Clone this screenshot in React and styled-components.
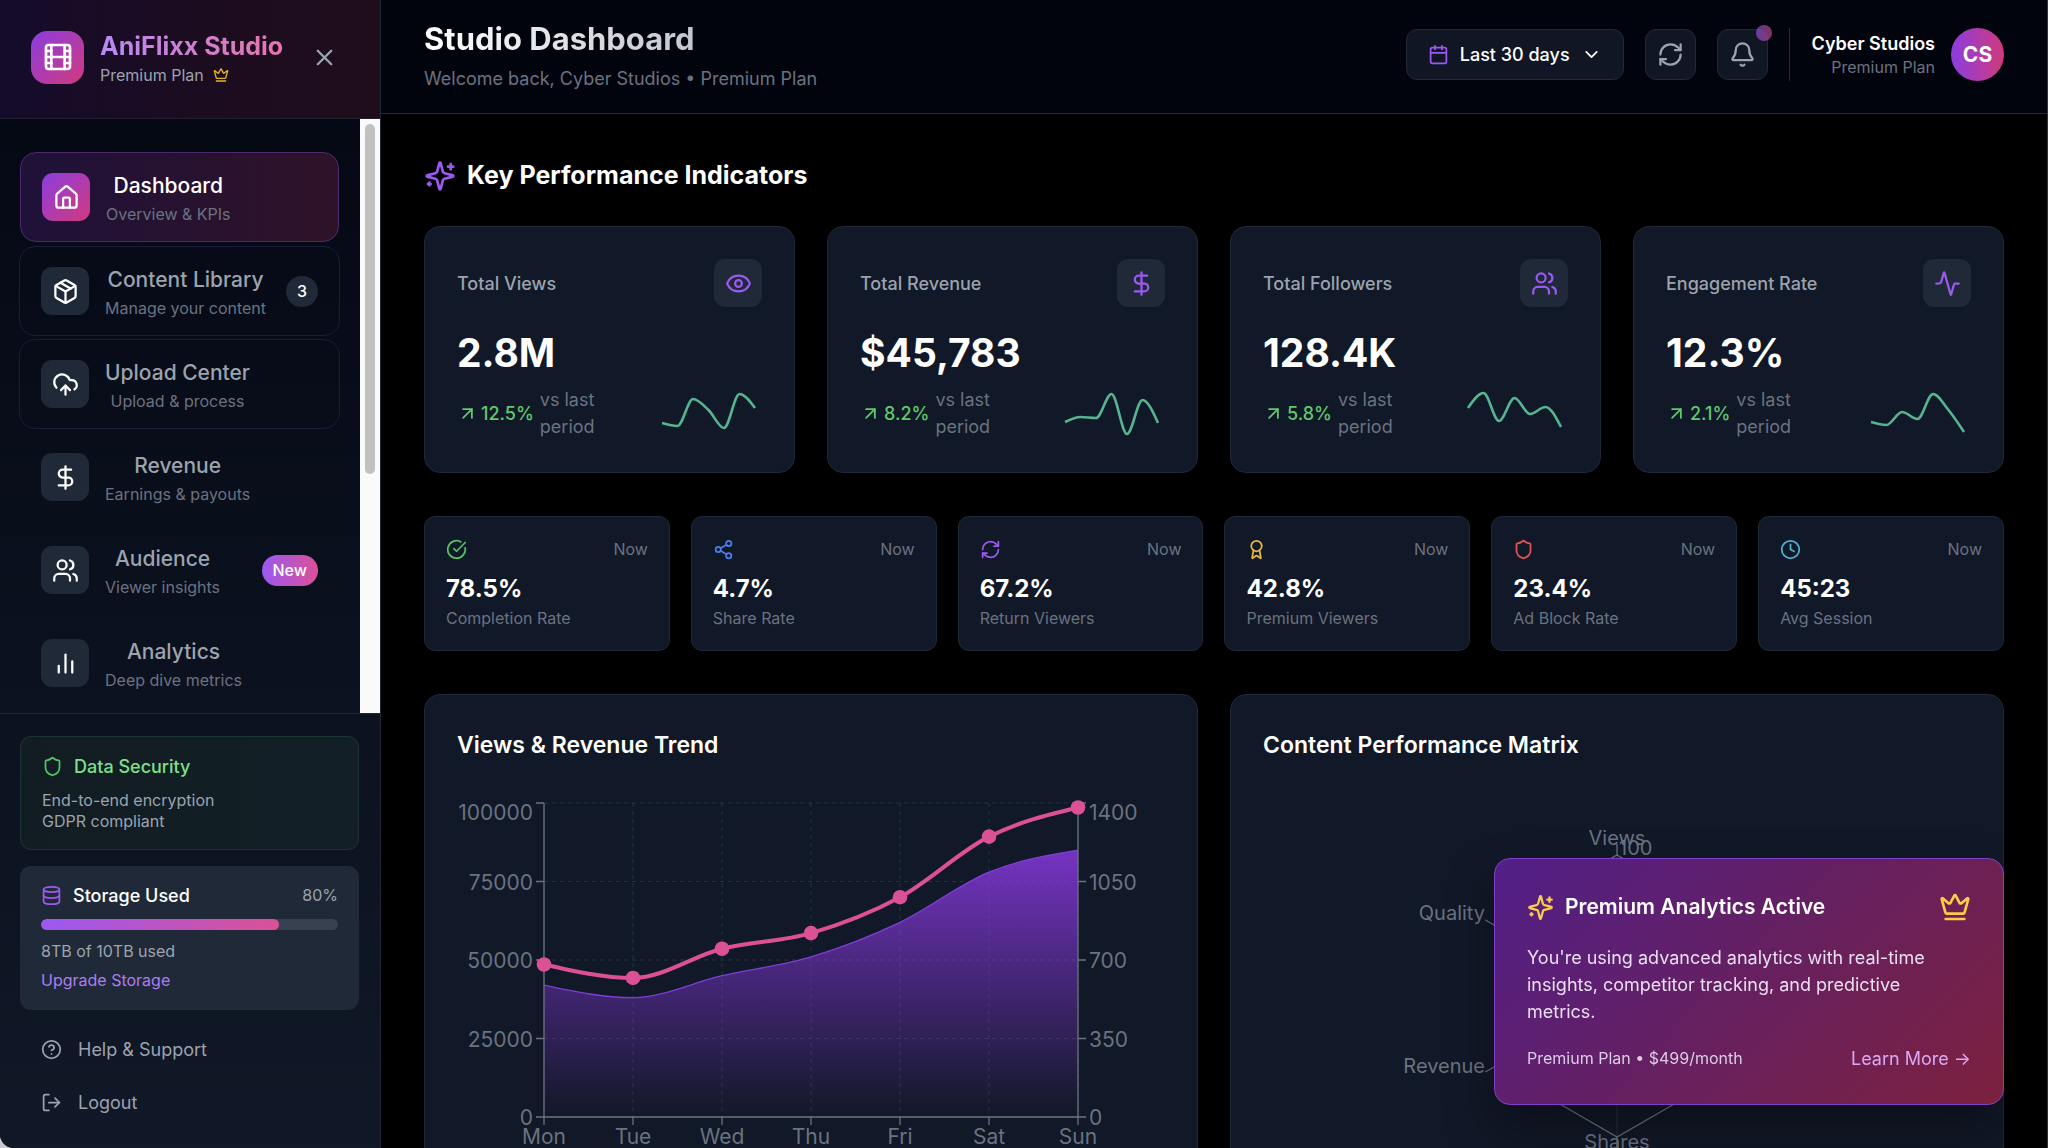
import React from "react";
import styled, { createGlobalStyle, css } from "styled-components";
import {
  Activity,
  ArrowUpRight,
  Award,
  Bell,
  Calendar,
  ChevronDown,
  CircleCheckBig,
  Clock,
  CloudUpload,
  Crown,
  Database,
  DollarSign,
  Eye,
  Film,
  HelpCircle,
  House,
  LogOut,
  Package,
  RefreshCw,
  Share2,
  Shield,
  Users,
  X,
} from "lucide-react";

const color = {
  panel: "#111827",
  raised: "#1f2937",
  line: "#1f2937",
  text: "#ffffff",
  soft: "#9ca3af",
  dim: "#6b7280",
  purple: "#9b59f2",
  green: "#5fc96b",
  spark: "#56b590",
  pink: "#dc5096",
  gold: "#fbcb4a",
};

const brandGradient = "linear-gradient(135deg, #8b3de0, #d13a7c)";

const GlobalStyle = createGlobalStyle`
  *, *::before, *::after { box-sizing: border-box; }
  body {
    margin: 0;
    background: #c9cbd0;
    color: ${color.text};
    font-family: Inter, "Noto Sans", sans-serif;
    font-size: 18px;
    line-height: 27px;
  }
  button, select { font: inherit; color: inherit; }
  button { cursor: pointer; }
  h1, h2, h3, p, ul, dl, dd { margin: 0; padding: 0; }
  ul { list-style: none; }
  svg { display: block; flex-shrink: 0; }
`;

const Shell = styled.div`
  display: flex;
  height: 100vh;
  background: #000;
  border-right: 1px solid #33363c;
  border-bottom-left-radius: 14px;
  overflow: hidden;
`;

/* ---------- Sidebar ---------- */

const Sidebar = styled.aside`
  display: flex;
  flex-direction: column;
  flex: 0 0 381px;
  min-height: 0;
  border-right: 1px solid ${color.line};
  background: linear-gradient(180deg, #030712, #111827);
`;

const Brand = styled.div`
  display: flex;
  align-items: center;
  height: 119px;
  padding: 0 31px 4px;
  border-bottom: 1px solid #231f30;
  background: linear-gradient(90deg, #150b2b, #1b0c20 50%, #1f0d1b);
`;

const BrandMark = styled.div`
  display: grid;
  place-items: center;
  width: 53px;
  height: 53px;
  margin-right: 16px;
  border-radius: 16px;
  background: ${brandGradient};
`;

const BrandText = styled.div`
  flex: 1;
  min-width: 0;
`;

const BrandName = styled.div`
  width: fit-content;
  font-size: 25px;
  font-weight: 700;
  line-height: 36px;
  white-space: nowrap;
  color: transparent;
  background: linear-gradient(90deg, #b78af5, #e874ae);
  background-clip: text;
`;

const BrandPlan = styled.div`
  display: flex;
  align-items: center;
  gap: 9px;
  font-size: 16px;
  line-height: 22px;
  color: ${color.soft};
`;

const CloseButton = styled.button`
  display: grid;
  place-items: center;
  width: 49px;
  height: 49px;
  padding: 0;
  border: 0;
  background: none;
  color: ${color.soft};
`;

const NavArea = styled.div`
  display: flex;
  flex: 1;
  min-height: 0;
`;

const NavList = styled.nav`
  display: flex;
  flex-direction: column;
  flex: 1;
  gap: 3px;
  min-width: 0;
  padding: 33px 20px 0 19px;
  overflow: hidden;
`;

const ScrollTrack = styled.div`
  flex: 0 0 20px;
  padding: 5px;
  background: #fafafa;
`;

const ScrollThumb = styled.div`
  height: 60%;
  border-radius: 5px;
  background: #c1c1c1;
`;

const NavIcon = styled.span`
  display: grid;
  place-items: center;
  flex: 0 0 48px;
  height: 48px;
  border-radius: 11px;
  background: ${color.raised};
  color: #fff;
`;

const NavItem = styled.button`
  display: flex;
  align-items: center;
  gap: 16px;
  padding: 16px 21px;
  border: 1px solid ${(p) => (p.$outlined ? "#1e1a3c" : "transparent")};
  border-radius: 16px;
  background: none;
  color: ${color.soft};
  ${(p) =>
    p.$active &&
    css`
      margin: 0 1px 1px;
      border-color: #4b2a6e;
      background: linear-gradient(90deg, #1f1139, #2f1228);
      color: #fff;
      ${NavIcon} {
        background: ${brandGradient};
      }
    `}
`;

const NavText = styled.span`
  display: flex;
  flex-direction: column;
  gap: 1px;
  text-align: center;
  white-space: nowrap;
`;

const NavTitle = styled.span`
  font-size: 21px;
  font-weight: 500;
  line-height: 34px;
`;

const NavHint = styled.span`
  font-size: 16px;
  line-height: 21px;
  color: ${color.dim};
`;

const NavBadge = styled.span`
  margin-left: auto;
  padding: 5px 11px;
  border-radius: 16px;
  font-size: 16px;
  font-weight: 500;
  line-height: 21px;
  color: #fff;
  background: ${(p) =>
    p.$bright ? "linear-gradient(90deg, #9b59f2, #dc5096)" : color.raised};
`;

const SideFooter = styled.div`
  padding: 22px 21px 19px 20px;
  border-top: 1px solid ${color.line};
`;

const SecurityCard = styled.section`
  padding: 16px 21px 17px;
  border: 1px solid #1c3530;
  border-radius: 11px;
  background: linear-gradient(90deg, #111d22, #121f26);
  font-size: 16px;
  line-height: 21px;
  color: ${color.soft};
`;

const StorageCard = styled.section`
  margin: 16px 0 13px;
  padding: 16px 21px;
  border-radius: 11px;
  background: ${color.raised};
  font-size: 16px;
  line-height: 22px;
  color: ${color.soft};
`;

const SideHeading = styled.h3`
  display: flex;
  align-items: center;
  gap: 11px;
  margin-bottom: 10px;
  font-size: 18px;
  font-weight: 500;
  line-height: 27px;
  color: ${(p) => p.$tone || "#fff"};
`;

const Percent = styled.span`
  margin-left: auto;
  font-size: 16px;
  font-weight: 400;
  color: ${color.soft};
`;

const Meter = styled.div`
  height: 11px;
  margin-bottom: 10px;
  border-radius: 6px;
  background: #374151;
  overflow: hidden;
`;

const MeterFill = styled.div`
  height: 100%;
  border-radius: 6px;
  background: linear-gradient(90deg, #9b59f2, #dc5096);
`;

const UpgradeButton = styled.button`
  display: block;
  margin-top: 5px;
  padding: 0;
  border: 0;
  background: none;
  font-size: 16px;
  line-height: 27px;
  color: #ad7df0;
`;

const SideAction = styled.button`
  display: flex;
  align-items: center;
  gap: 16px;
  width: 100%;
  padding: 13px 21px;
  border: 0;
  background: none;
  color: ${color.soft};
`;

/* ---------- Top bar ---------- */

const Main = styled.main`
  display: flex;
  flex-direction: column;
  flex: 1;
  min-width: 0;
`;

const TopBar = styled.header`
  display: flex;
  align-items: center;
  justify-content: space-between;
  padding: 18px 43px 21px;
  border-bottom: 1px solid ${color.line};
  background: #02040d;
`;

const PageTitle = styled.h1`
  width: fit-content;
  margin-bottom: 5px;
  font-size: 31px;
  font-weight: 700;
  line-height: 42px;
  color: transparent;
  background: linear-gradient(90deg, #fff, #c3c6cd);
  background-clip: text;
`;

const Muted = styled.p`
  color: ${color.dim};
`;

const Controls = styled.div`
  display: flex;
  align-items: center;
  gap: 21px;
  padding-bottom: 2px;
`;

const controlBox = css`
  border: 1px solid ${color.line};
  border-radius: 11px;
  background: #101624;
`;

const RangePicker = styled.label`
  ${controlBox}
  display: flex;
  align-items: center;
  gap: 11px;
  height: 51px;
  padding: 0 21px;
`;

const RangeSelect = styled.select`
  field-sizing: content;
  appearance: none;
  padding: 0;
  border: 0;
  background: none;
  font-weight: 500;
`;

const IconButton = styled.button`
  ${controlBox}
  position: relative;
  display: grid;
  place-items: center;
  width: 51px;
  height: 51px;
  padding: 0;
  color: ${color.soft};
`;

const AlertDot = styled.span`
  position: absolute;
  top: -5px;
  right: -5px;
  width: 16px;
  height: 16px;
  border-radius: 50%;
  background: linear-gradient(90deg, #9b59f2, #dc5096);
  opacity: 0.6;
`;

const Account = styled.div`
  display: flex;
  align-items: center;
  gap: 16px;
  padding-left: 22px;
  border-left: 1px solid ${color.line};
  text-align: right;
`;

const AccountName = styled.div`
  font-weight: 600;
`;

const AccountPlan = styled.div`
  font-size: 16px;
  line-height: 21px;
  color: ${color.dim};
`;

const Avatar = styled.div`
  display: grid;
  place-items: center;
  width: 53px;
  height: 53px;
  border-radius: 50%;
  background: linear-gradient(90deg, #8b3de0, #d13a7c);
  font-size: 21px;
  font-weight: 700;
`;

/* ---------- Content ---------- */

const Content = styled.div`
  flex: 1;
  min-height: 0;
  padding: 43px;
  overflow-y: auto;
  scrollbar-width: none;
`;

const SectionTitle = styled.h2`
  display: flex;
  align-items: center;
  gap: 11px;
  margin-bottom: 32px;
  font-size: 25px;
  font-weight: 700;
  line-height: 37px;
`;

const CardGrid = styled.div`
  display: grid;
  grid-template-columns: repeat(${(p) => p.$columns}, minmax(0, 1fr));
  gap: ${(p) => p.$gap}px;
  margin-bottom: 43px;
`;

const Card = styled.section`
  padding: 32px;
  border: 1px solid ${color.line};
  border-radius: 16px;
  background: ${color.panel};
`;

const SmallCard = styled.section`
  padding: 21px;
  border: 1px solid ${color.line};
  border-radius: 11px;
  background: ${color.panel};
`;

const Spread = styled.div`
  display: flex;
  align-items: center;
  justify-content: space-between;
`;

const KpiLabel = styled.h3`
  font-size: 18px;
  font-weight: 500;
  color: ${color.soft};
`;

const KpiIcon = styled.div`
  display: grid;
  place-items: center;
  width: 48px;
  height: 48px;
  border-radius: 11px;
  background: ${color.raised};
  color: ${color.purple};
`;

const KpiValue = styled.div`
  margin: 21px 0 8px;
  font-size: 39px;
  font-weight: 700;
  line-height: 50px;
`;

const Trend = styled.div`
  display: flex;
  align-items: center;
  color: ${color.green};
  font-weight: 500;
`;

const TrendValue = styled.span`
  margin: 0 6px 0 3px;
`;

const TrendNote = styled.span`
  max-width: 64px;
  font-weight: 400;
  color: ${color.dim};
`;

const SmallTop = styled(Spread)`
  height: 22px;
  margin-bottom: 11px;
  font-size: 16px;
  color: ${color.dim};
`;

const SmallValue = styled.div`
  font-size: 24px;
  font-weight: 700;
  line-height: 36px;
`;

const SmallLabel = styled.div`
  font-size: 16px;
  line-height: 22px;
  color: ${color.dim};
`;

const ChartTitle = styled.h3`
  margin-bottom: 32px;
  font-size: 23px;
  font-weight: 600;
  line-height: 37px;
`;

const Chart = styled.svg`
  width: 100%;
  height: auto;
  font-size: ${(p) => p.$label}px;
  text {
    fill: ${color.dim};
  }
`;

/* ---------- Floating notice ---------- */

const Notice = styled.aside`
  position: fixed;
  right: 44px;
  bottom: 43px;
  width: 510px;
  padding: 32px;
  border: 1px solid #7f3fcb;
  border-radius: 16px;
  background: linear-gradient(135deg, #511f88, #662060 50%, #7c213e);
  box-shadow: 0 24px 48px rgba(0, 0, 0, 0.35);
`;

const NoticeTitle = styled.h3`
  display: flex;
  align-items: center;
  gap: 11px;
  font-size: 21px;
  font-weight: 600;
  line-height: 32px;
`;

const NoticeText = styled.p`
  margin: 21px 0 20px;
  color: #eadff2;
`;

const NoticePlan = styled.span`
  font-size: 16px;
  color: #dccde6;
`;

const NoticeLink = styled.a`
  color: #d9a9f7;
  text-decoration: none;
`;

/* ---------- Drawings ---------- */

const Sparkles = ({ size, stroke }) => (
  <svg
    width={size}
    height={size}
    viewBox="0 0 24 24"
    fill="none"
    stroke={stroke}
    strokeWidth="2"
    strokeLinecap="round"
    strokeLinejoin="round"
    aria-hidden="true"
  >
    <path d="M9.937 15.5A2 2 0 0 0 8.5 14.063l-6.135-1.582a.5.5 0 0 1 0-.962L8.5 9.936A2 2 0 0 0 9.937 8.5l1.582-6.135a.5.5 0 0 1 .963 0L14.063 8.5A2 2 0 0 0 15.5 9.937l6.135 1.581a.5.5 0 0 1 0 .964L15.5 14.063a2 2 0 0 0-1.437 1.437l-1.582 6.135a.5.5 0 0 1-.963 0z" />
    <path d="M20 3v4M22 5h-4M4 17v2M5 18H3" />
  </svg>
);

const Bars = ({ size }) => (
  <svg
    width={size}
    height={size}
    viewBox="0 0 24 24"
    fill="none"
    stroke="currentColor"
    strokeWidth="2"
    strokeLinecap="round"
    aria-hidden="true"
  >
    <path d="M18 20V10M12 20V4M6 20v-6" />
  </svg>
);

/* Monotone cubic path through points with growing x. */
function curve(points) {
  const n = points.length;
  const slope = points
    .slice(1)
    .map((p, i) => (p[1] - points[i][1]) / (p[0] - points[i][0]));
  const tangent = points.map((_, i) => {
    if (i === 0 || i === n - 1) return null;
    const a = slope[i - 1];
    const b = slope[i];
    if (a * b <= 0) return 0;
    return Math.sign(a) * Math.min(Math.abs(a), Math.abs(b), Math.abs(a + b) / 4) * 2;
  });
  tangent[0] = (3 * slope[0] - tangent[1]) / 2;
  tangent[n - 1] = (3 * slope[n - 2] - tangent[n - 2]) / 2;
  let d = `M${points[0][0]},${points[0][1]}`;
  for (let i = 1; i < n; i++) {
    const [ax, ay] = points[i - 1];
    const [bx, by] = points[i];
    const h = (bx - ax) / 3;
    d += `C${ax + h},${ay + h * tangent[i - 1]},${bx - h},${by - h * tangent[i]},${bx},${by}`;
  }
  return d;
}

const Sparkline = ({ points }) => (
  <svg width="107" height="54" viewBox="0 0 107 54" aria-hidden="true">
    <path
      d={curve(points.map((y, i) => [7 + i * 15.5, y]))}
      fill="none"
      stroke={color.spark}
      strokeWidth="2.6"
    />
  </svg>
);

const week = [
  ["Mon", 42000, 680],
  ["Tue", 38000, 620],
  ["Wed", 45000, 750],
  ["Thu", 51000, 820],
  ["Fri", 62000, 980],
  ["Sat", 78000, 1250],
  ["Sun", 85000, 1380],
];

const plot = { left: 87, right: 621, top: 7, bottom: 321 };

function TrendChart() {
  const { left, right, top, bottom } = plot;
  const x = (i) => left + ((right - left) * i) / 6;
  const y = (share) => bottom - (bottom - top) * share;
  const views = week.map((d, i) => [x(i), y(d[1] / 100000)]);
  const revenue = week.map((d, i) => [x(i), y(d[2] / 1400)]);
  const ticks = [0, 0.25, 0.5, 0.75, 1];
  const labelY = (t) => (t === 1 ? top + 17 : y(t) + 8);
  return (
    <Chart $label={21} viewBox="0 0 708 400" role="img" aria-label="Views and revenue by day">
      <defs>
        <linearGradient id="viewsFill" x1="0" y1="0" x2="0" y2="1">
          <stop offset="0" stopColor="#8e3ae8" stopOpacity="0.8" />
          <stop offset="1" stopColor="#8e3ae8" stopOpacity="0" />
        </linearGradient>
      </defs>
      <g stroke="#283242" strokeDasharray="4 4">
        {ticks.map((t) => (
          <path key={t} d={`M${left},${y(t)}H${right}`} />
        ))}
        {week.map((d, i) => (
          <path key={d[0]} d={`M${x(i)},${top}V${bottom}`} />
        ))}
      </g>
      <path d={`${curve(views)}L${right},${bottom}L${left},${bottom}Z`} fill="url(#viewsFill)" />
      <path d={curve(views)} fill="none" stroke="#7c3fd6" strokeWidth="1.3" />
      <g stroke={color.dim} strokeWidth="1.3">
        <path d={`M${left},${top}V${bottom}H${right}V${top}`} fill="none" />
        {ticks.map((t) => (
          <path key={t} d={`M${left - 8},${y(t)}h8M${right},${y(t)}h8`} />
        ))}
        {week.map((d, i) => (
          <path key={d[0]} d={`M${x(i)},${bottom}v8`} />
        ))}
      </g>
      {ticks.map((t) => (
        <g key={t}>
          <text x={left - 11} y={labelY(t)} textAnchor="end">
            {t * 100000}
          </text>
          <text x={right + 11} y={labelY(t)}>
            {t * 1400}
          </text>
        </g>
      ))}
      {week.map((d, i) => (
        <text key={d[0]} x={x(i)} y={bottom + 27} textAnchor="middle">
          {d[0]}
        </text>
      ))}
      <path d={curve(revenue)} fill="none" stroke={color.pink} strokeWidth="4" />
      {revenue.map(([cx, cy]) => (
        <circle key={cx} cx={cx} cy={cy} r="7.3" fill={color.pink} />
      ))}
    </Chart>
  );
}

function RadarChart() {
  const cx = 354;
  const cy = 200;
  const at = (i, r) => {
    const a = (Math.PI / 3) * i - Math.PI / 2;
    return `${cx + r * Math.cos(a)},${cy + r * Math.sin(a)}`;
  };
  const corners = [0, 1, 2, 3, 4, 5];
  return (
    <Chart $label={20} viewBox="0 0 708 400" role="img" aria-label="Content performance by measure">
      <g fill="none" stroke="#283242">
        {corners.map((i) => (
          <path key={i} d={`M${cx},${cy}L${at(i, 141)}`} />
        ))}
      </g>
      <g fill="none" stroke={color.dim} strokeWidth="1.3">
        <polygon points={corners.map((i) => at(i, 141)).join(" ")} />
        {corners.map((i) => (
          <path key={i} d={`M${at(i, 141)}L${at(i, 152)}`} />
        ))}
      </g>
      <text x={cx} y="49" textAnchor="middle">Views</text>
      <text x={cx + 2} y="59">100</text>
      <text x="222" y="124" textAnchor="end">Quality</text>
      <text x="222" y="277" textAnchor="end">Revenue</text>
      <text x={cx} y="353" textAnchor="middle">Shares</text>
    </Chart>
  );
}

/* ---------- Data ---------- */

const navItems = [
  { icon: House, title: "Dashboard", hint: "Overview & KPIs", active: true },
  { icon: Package, title: "Content Library", hint: "Manage your content", badge: "3", outlined: true },
  { icon: CloudUpload, title: "Upload Center", hint: "Upload & process", outlined: true },
  { icon: DollarSign, title: "Revenue", hint: "Earnings & payouts" },
  { icon: Users, title: "Audience", hint: "Viewer insights", badge: "New", bright: true },
  { icon: Bars, title: "Analytics", hint: "Deep dive metrics" },
];

const kpis = [
  { label: "Total Views", value: "2.8M", change: "12.5%", icon: Eye, points: [37, 40, 13, 24, 42, 8, 22] },
  { label: "Total Revenue", value: "$45,783", change: "8.2%", icon: DollarSign, points: [36, 31, 32, 8, 48, 14, 37] },
  { label: "Total Followers", value: "128.4K", change: "5.8%", icon: Users, points: [22, 7, 35, 12, 28, 21, 41] },
  { label: "Engagement Rate", value: "12.3%", change: "2.1%", icon: Activity, points: [36, 39, 26, 33, 8, 24, 46] },
];

const quickStats = [
  { icon: CircleCheckBig, tone: "#56c266", value: "78.5%", label: "Completion Rate" },
  { icon: Share2, tone: "#4a7fee", value: "4.7%", label: "Share Rate" },
  { icon: RefreshCw, tone: color.purple, value: "67.2%", label: "Return Viewers" },
  { icon: Award, tone: "#e6bb3e", value: "42.8%", label: "Premium Viewers" },
  { icon: Shield, tone: "#e05555", value: "23.4%", label: "Ad Block Rate" },
  { icon: Clock, tone: "#4fb5d0", value: "45:23", label: "Avg Session" },
];

const storageUsed = 80;

export default function App() {
  return (
    <>
      <GlobalStyle />
      <Shell>
        <Sidebar>
          <Brand>
            <BrandMark>
              <Film size={32} />
            </BrandMark>
            <BrandText>
              <BrandName>AniFlixx Studio</BrandName>
              <BrandPlan>
                Premium Plan <Crown size={16} color="#e3b62f" />
              </BrandPlan>
            </BrandText>
            <CloseButton aria-label="Close menu">
              <X size={27} />
            </CloseButton>
          </Brand>

          <NavArea>
            <NavList aria-label="Studio">
              {navItems.map(({ icon: Icon, ...item }) => (
                <NavItem
                  key={item.title}
                  $active={item.active}
                  $outlined={item.outlined}
                  aria-current={item.active ? "page" : undefined}
                >
                  <NavIcon>
                    <Icon size={27} />
                  </NavIcon>
                  <NavText>
                    <NavTitle>{item.title}</NavTitle>
                    <NavHint>{item.hint}</NavHint>
                  </NavText>
                  {item.badge && <NavBadge $bright={item.bright}>{item.badge}</NavBadge>}
                </NavItem>
              ))}
            </NavList>
            <ScrollTrack aria-hidden="true">
              <ScrollThumb />
            </ScrollTrack>
          </NavArea>

          <SideFooter>
            <SecurityCard>
              <SideHeading $tone="#7ee08b">
                <Shield size={21} color="#56c266" />
                Data Security
              </SideHeading>
              <p>End-to-end encryption</p>
              <p>GDPR compliant</p>
            </SecurityCard>
            <StorageCard>
              <SideHeading>
                <Database size={21} color={color.purple} />
                Storage Used
                <Percent>{storageUsed}%</Percent>
              </SideHeading>
              <Meter>
                <MeterFill style={{ width: `${storageUsed}%` }} />
              </Meter>
              <p>8TB of 10TB used</p>
              <UpgradeButton>Upgrade Storage</UpgradeButton>
            </StorageCard>
            <SideAction>
              <HelpCircle size={21} />
              Help &amp; Support
            </SideAction>
            <SideAction>
              <LogOut size={21} />
              Logout
            </SideAction>
          </SideFooter>
        </Sidebar>

        <Main>
          <TopBar>
            <div>
              <PageTitle>Studio Dashboard</PageTitle>
              <Muted>Welcome back, Cyber Studios • Premium Plan</Muted>
            </div>
            <Controls>
              <RangePicker>
                <Calendar size={21} color={color.purple} />
                <RangeSelect aria-label="Date range" defaultValue="30">
                  <option value="30">Last 30 days</option>
                </RangeSelect>
                <ChevronDown size={21} />
              </RangePicker>
              <IconButton aria-label="Refresh">
                <RefreshCw size={27} />
              </IconButton>
              <IconButton aria-label="Notifications">
                <Bell size={27} />
                <AlertDot />
              </IconButton>
              <Account>
                <div>
                  <AccountName>Cyber Studios</AccountName>
                  <AccountPlan>Premium Plan</AccountPlan>
                </div>
                <Avatar>CS</Avatar>
              </Account>
            </Controls>
          </TopBar>

          <Content>
            <SectionTitle>
              <Sparkles size={32} stroke={color.purple} />
              Key Performance Indicators
            </SectionTitle>

            <CardGrid $columns={4} $gap={32}>
              {kpis.map(({ icon: Icon, ...kpi }) => (
                <Card key={kpi.label}>
                  <Spread>
                    <KpiLabel>{kpi.label}</KpiLabel>
                    <KpiIcon>
                      <Icon size={27} />
                    </KpiIcon>
                  </Spread>
                  <KpiValue>{kpi.value}</KpiValue>
                  <Spread>
                    <Trend>
                      <ArrowUpRight size={21} />
                      <TrendValue>{kpi.change}</TrendValue>
                      <TrendNote>vs last period</TrendNote>
                    </Trend>
                    <Sparkline points={kpi.points} />
                  </Spread>
                </Card>
              ))}
            </CardGrid>

            <CardGrid $columns={6} $gap={21}>
              {quickStats.map(({ icon: Icon, ...stat }) => (
                <SmallCard key={stat.label}>
                  <SmallTop>
                    <Icon size={21} color={stat.tone} />
                    Now
                  </SmallTop>
                  <SmallValue>{stat.value}</SmallValue>
                  <SmallLabel>{stat.label}</SmallLabel>
                </SmallCard>
              ))}
            </CardGrid>

            <CardGrid $columns={2} $gap={32}>
              <Card>
                <ChartTitle>Views &amp; Revenue Trend</ChartTitle>
                <TrendChart />
              </Card>
              <Card>
                <ChartTitle>Content Performance Matrix</ChartTitle>
                <RadarChart />
              </Card>
            </CardGrid>
          </Content>
        </Main>
      </Shell>

      <Notice>
        <Spread>
          <NoticeTitle>
            <Sparkles size={27} stroke={color.gold} />
            Premium Analytics Active
          </NoticeTitle>
          <Crown size={32} color={color.gold} />
        </Spread>
        <NoticeText>
          You're using advanced analytics with real-time insights, competitor tracking, and
          predictive metrics.
        </NoticeText>
        <Spread>
          <NoticePlan>Premium Plan • $499/month</NoticePlan>
          <NoticeLink href="#analytics">Learn More →</NoticeLink>
        </Spread>
      </Notice>
    </>
  );
}
